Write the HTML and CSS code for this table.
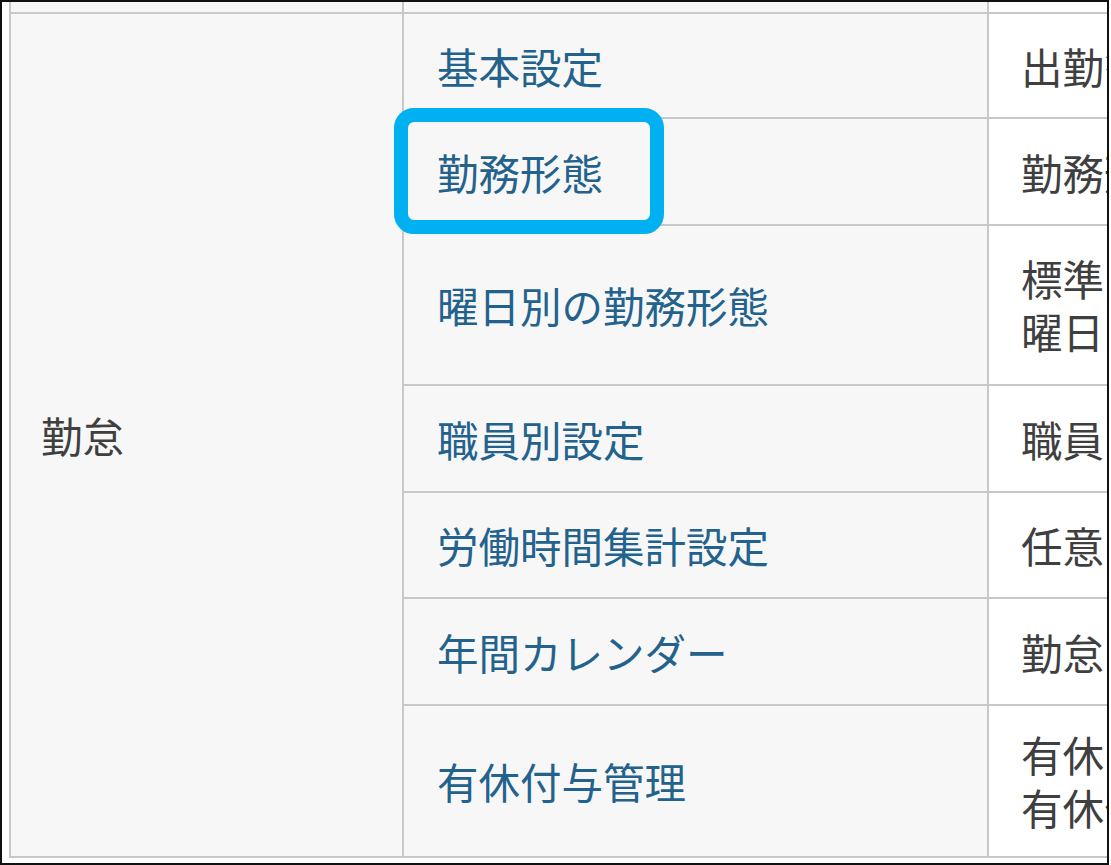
FILE: index.html
```html
<!DOCTYPE html>
<html lang="ja">
<head>
<meta charset="utf-8">
<title>勤怠設定</title>
<link rel="stylesheet" href="styles.css">
</head>
<body>
<div class="frame">
  <table class="settings">
    <colgroup>
      <col class="c1"><col class="c2"><col class="c3">
    </colgroup>
    <tr class="r0"><td class="cat"></td><td class="item"></td><td class="desc"></td></tr>
    <tr class="r1">
      <td class="cat" rowspan="7">勤怠</td>
      <td class="item"><a href="#">基本設定</a></td>
      <td class="desc">出勤簿の基本的な設定を行います</td>
    </tr>
    <tr class="r2">
      <td class="item"><a href="#">勤務形態</a></td>
      <td class="desc">勤務形態の登録を行います</td>
    </tr>
    <tr class="r3">
      <td class="item"><a href="#">曜日別の勤務形態</a></td>
      <td class="desc two">標準の勤務形態を設定します<br>曜日ごとに設定します</td>
    </tr>
    <tr class="r4">
      <td class="item"><a href="#">職員別設定</a></td>
      <td class="desc">職員ごとの設定を行います</td>
    </tr>
    <tr class="r5">
      <td class="item"><a href="#">労働時間集計設定</a></td>
      <td class="desc">任意の集計設定を行います</td>
    </tr>
    <tr class="r6">
      <td class="item"><a href="#">年間カレンダー</a></td>
      <td class="desc">勤怠で使用するカレンダーです</td>
    </tr>
    <tr class="r7">
      <td class="item"><a href="#">有休付与管理</a></td>
      <td class="desc two">有休の付与を管理します<br>有休付与の設定を行います</td>
    </tr>
  </table>
  <div class="highlight"></div>
</div>
</body>
</html>
```

FILE: styles.css
```css
html, body {
  margin: 0;
  padding: 0;
  background: #ffffff;
}

.frame {
  position: relative;
  box-sizing: border-box;
  width: 1109px;
  height: 865px;
  border: 2px solid #111111;
  overflow: hidden;
  background: #ffffff;
}

.settings {
  border-collapse: collapse;
  table-layout: fixed;
  width: 1580px;
  margin-left: 7px;
  font-family: "Noto Sans CJK JP", "Noto Sans", sans-serif;
  font-size: 41.5px;
  line-height: 52px;
  color: #3f3f3f;
}

.c1 { width: 393px; }
.c2 { width: 585px; }
.c3 { width: 602px; }

.settings td {
  border: 2px solid #c8c8c8;
  padding: 0 10px 0 31px;
  vertical-align: middle;
  white-space: nowrap;
  overflow: hidden;
}

.settings td.cat {
  background: #f7f7f7;
  padding-left: 30px;
}

.settings td.item {
  background: #f7f7f7;
  padding-left: 33px;
}

.settings td.desc {
  background: #ffffff;
  padding-left: 32px;
}

.settings .r0 td {
  border-top: none;
}

.r0 { height: 11px; }
.r1 { height: 105px; }
.r2 { height: 107px; }
.r3 { height: 160px; }
.r4 { height: 107px; }
.r5 { height: 106px; }
.r6 { height: 107px; }
.r7 { height: 152px; }

.settings td.desc.two {
  line-height: 53px;
}

.settings a {
  color: #23628c;
  text-decoration: none;
}

.highlight {
  position: absolute;
  left: 392px;
  top: 106px;
  width: 270px;
  height: 126px;
  box-sizing: border-box;
  border: 14px solid #00b0f0;
  border-radius: 20px;
}
```
